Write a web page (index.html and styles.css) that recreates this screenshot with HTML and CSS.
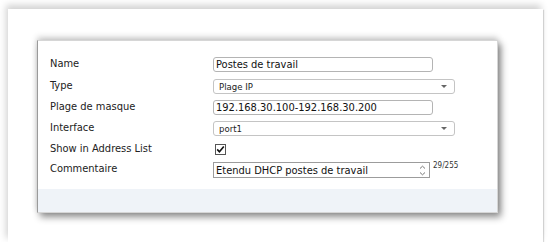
FILE: index.html
```html
<!DOCTYPE html>
<html>
<head>
  <title>Adresse - Postes de travail</title>
  <link rel="stylesheet" href="styles.css">
</head>
<body>

  <!-- outer snapshot frame -->
  <div class="frame">
    <div class="card">

      <div class="form">
        <label class="lbl">Name</label>
        <div class="field">
          <input class="text" type="text" value="Postes de travail">
        </div>

        <label class="lbl">Type</label>
        <div class="field">
          <div class="select">
            <span>Plage IP</span>
            <span class="caret"></span>
          </div>
        </div>

        <label class="lbl">Plage de masque</label>
        <div class="field">
          <input class="text" type="text" value="192.168.30.100-192.168.30.200">
        </div>

        <label class="lbl">Interface</label>
        <div class="field">
          <div class="select">
            <span>port1</span>
            <span class="caret"></span>
          </div>
        </div>

        <label class="lbl">Show in Address List</label>
        <div class="field">
          <svg class="check" width="11" height="11" viewBox="0 0 11 11">
            <rect x="0.5" y="0.5" width="10" height="10" fill="#fff" stroke="#555"/>
            <path d="M2.2 5.4 L4.4 7.8 L8.8 2.4" fill="none" stroke="#111" stroke-width="1.6"/>
          </svg>
        </div>

        <label class="lbl">Commentaire</label>
        <div class="field comment-field">
          <div class="comment">
            <span class="comment-text">Etendu DHCP postes de travail</span>
            <span class="spin">
              <svg width="7" height="11" viewBox="0 0 7 11">
                <path d="M1 3.5 L3.5 1.2 L6 3.5" fill="none" stroke="#777" stroke-width="1"/>
                <path d="M1 7.5 L3.5 9.8 L6 7.5" fill="none" stroke="#777" stroke-width="1"/>
              </svg>
            </span>
          </div>
          <span class="counter">29/255</span>
        </div>
      </div>

      <div class="footer"></div>
    </div>
  </div>

</body>
</html>
```

FILE: styles.css
```css
body {
  margin: 0;
  padding: 0;
  background-color: #ffffff;
  font-family: "DejaVu Sans Condensed", "DejaVu Sans", Verdana, sans-serif;
  color: #222;
}

/* Snapshot frame */
.frame {
  width: 535px;
  height: 233px;
  margin: 9px 0 0 8px;
  padding: 31px 0 0 29px;
  box-sizing: border-box;
  background-color: #fff;
  box-shadow: -2px -4px 7px rgba(0, 0, 0, 0.18), 1px 1px 1px rgba(0, 0, 0, 0.14);
}

    /* Dialog card */
    .card {
      width: 461px;
      height: 173px;
      box-sizing: border-box;
      display: flex;
      flex-direction: column;
      background-color: #fff;
      border: 1px solid #d6d6d6;
      border-left-color: #9a9a9a;
      box-shadow: 3px 4px 7px rgba(0, 0, 0, 0.45), 0 -3px 6px rgba(0, 0, 0, 0.18);
    }

    .form {
      flex: 1;
      display: grid;
      grid-template-columns: 163px auto;
      grid-template-rows: 22px 21px 21px 21px 20px;
      padding: 16px 0 0 12px;
    }

    .lbl {
      font-size: 11px;
      line-height: 13px;
      color: #222;
    }

    .field {
      display: flex;
      align-items: flex-start;
    }

    .text {
      width: 220px;
      height: 15px;
      box-sizing: border-box;
      margin: 0;
      padding: 0 2px;
      border: 1px solid #b4b4b4;
      border-radius: 3px;
      font-family: inherit;
      font-size: 11px;
      color: #111;
      background: #fff;
    }

    .select {
      width: 242px;
      height: 15px;
      box-sizing: border-box;
      display: flex;
      align-items: center;
      justify-content: space-between;
      padding: 0 7px 0 5px;
      border: 1px solid #c4c4c4;
      border-radius: 3px;
      font-size: 9.5px;
      color: #222;
    }

    .caret {
      width: 0;
      height: 0;
      border-left: 3px solid transparent;
      border-right: 3px solid transparent;
      border-top: 3px solid #666;
    }

    .check {
      margin: 2px 0 0 2px;
    }

    .comment-field {
      gap: 3px;
    }

    .comment {
      width: 217px;
      height: 16px;
      box-sizing: border-box;
      display: flex;
      align-items: center;
      justify-content: space-between;
      padding: 0 3px 0 2px;
      border: 1px solid #9c9c9c;
      font-size: 11px;
      color: #111;
    }

    .spin {
      display: flex;
      align-items: center;
    }

    .counter {
      font-size: 8px;
      color: #333;
      margin-top: -1px;
    }

    .footer {
      height: 23px;
      background-color: #eff3f8;
    }
```
